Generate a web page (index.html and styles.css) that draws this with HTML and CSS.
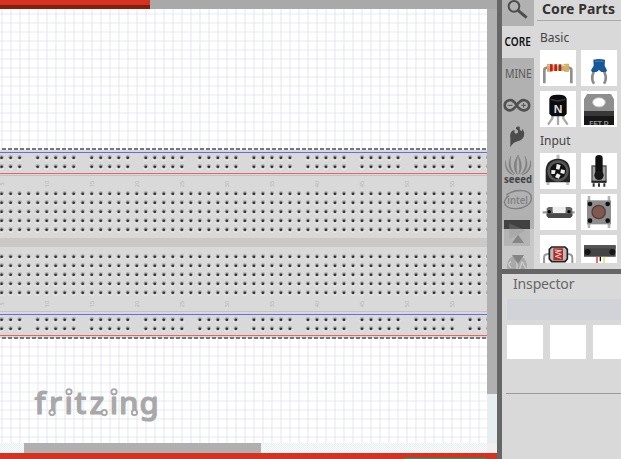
FILE: index.html
```html
<!DOCTYPE html>
<html lang="en">
<head>
<meta charset="utf-8">
<title>Fritzing</title>
<link rel="stylesheet" href="styles.css">
</head>
<body>
<div class="app">
  <main class="workspace">
    <div class="tabs"><div class="tab-active"></div></div>
    <div class="stage">
      <div class="canvas">
        <svg class="board" width="487" height="191" viewBox="0 148 487 191">
          <rect y="150" width="487" height="188" fill="#d9d9d9"/>
          <rect y="238" width="487" height="9" fill="#cac9c7"/>
          <path d="M0 149H487" stroke="#777" stroke-width="2" stroke-dasharray="4 2" stroke-dashoffset="4"/>
          <path d="M0 338H487" stroke="#777" stroke-width="2" stroke-dasharray="4 2" stroke-dashoffset="4"/>
          <path d="M0 152.500H487M0 314.500H487" stroke="#6a68ed"/>
          <path d="M0 173.500H487M0 335.500H487" stroke="#ee6062"/>
          <path d="M0 175.500H487M0 311.500H487" stroke="#c2c2c2"/>
          <g id="holes"></g>
          <g id="labels" class="column-number"></g>
        </svg>
        <svg class="brand" width="130" height="40" viewBox="30 385 130 40">
          <g class="brand-text">
            <text y="414" x="34.500 49 64.500 74.500 89.500 109.700 119 139.500">fritzing</text>
          </g>
          <g fill="#fff" stroke="#a8a8a8" stroke-width="1.900">
            <circle cx="69" cy="391.700" r="2.600"/><circle cx="114" cy="391.700" r="2.600"/>
            <circle cx="52" cy="412.600" r="2.600"/><circle cx="104.300" cy="412.600" r="2.600"/><circle cx="134.500" cy="412.600" r="2.600"/>
          </g>
        </svg>
      </div>
      <div class="vscroll"><div class="vthumb"></div></div>
    </div>
    <div class="hscroll"><div class="hthumb"></div><div class="corner"></div></div>
    <div class="status"><div class="status-ok"></div></div>
  </main>
  <aside class="side">
    <section class="parts">
      <nav class="bins">
        <div class="bin search"><svg width="32" height="26" viewBox="0 0 96 78"><circle cx="36" cy="19" r="16" fill="none" stroke="#4c4c4c" stroke-width="6"/><path d="M48 31L74 53" stroke="#4c4c4c" stroke-width="9"/></svg></div>
        <div class="bin current"><span class="bin-label">CORE</span></div>
        <div class="bin"><span class="bin-label mine">MINE</span></div>
        <div class="bin"><svg viewBox="0 0 96 96"><path d="M44 46C36 32 28 29 21 31C4 36 4 57 21 61C32 63 38 55 44 46S58 28 68 31C86 36 86 57 68 61C58 63 51 57 44 46" fill="none" stroke="#515151" stroke-width="8"/><path d="M17 46H31M58 46H72M65 39V53" stroke="#515151" stroke-width="3"/></svg></div>
        <div class="bin"><svg viewBox="0 0 96 96"><path d="M25 76V47C23 34 29 24 37 25Q40 26 37 31C38 36 46 36 48 31C49 25 46 23 42 21C40 14 48 11 54 15C51 20 54 24 58 28C61 26 61 23 60 20C70 29 69 48 55 55C46 60 37 56 25 76Z" fill="#4b4b4b"/></svg></div>
        <div class="bin"><svg viewBox="0 0 96 96"><g fill="#808080" stroke="#808080"><path d="M48 3C31 29 34 48 46 61C42 40 42 29 48 3ZM48 3C62 27 61 48 50 61C54 40 53 29 48 3ZM27 6C14 33 22 51 40 61C24 44 23 29 27 6ZM69 6C82 33 74 51 56 61C72 44 73 29 69 6ZM11 19C5 40 17 60 36 63C18 52 11 40 11 19ZM85 19C91 40 79 60 60 63C78 52 85 40 85 19Z"/></g><text class="seeed" x="6" y="87" textLength="84" lengthAdjust="spacingAndGlyphs">seeed</text></svg></div>
        <div class="bin"><svg viewBox="0 0 96 96"><path d="M13 28C34 10 87 5 88 36C89 55 65 67 43 68C17 69 5 58 8 45C11 36 15 32 20 29" fill="none" stroke="#808080" stroke-width="4"/><text class="intel" x="16" y="54" textLength="62" lengthAdjust="spacingAndGlyphs">intel</text></svg></div>
        <div class="bin"><svg viewBox="0 0 96 96"><path d="M6 6H84V33H6Z" fill="#414141"/><path d="M0 33H96V96H0Z" fill="#c8c8c8"/><path d="M6 33H84V84H6Z" fill="#b4b4b4"/><path d="M22 16L61 33H22Z" fill="#5a5a5a"/><path d="M22 33H62L70 38L22 63Z" fill="#a9a9a9"/><path d="M48 50L66 75H30Z" fill="#858585"/></svg></div>
        <div class="bin last"><svg viewBox="0 0 96 57"><circle cx="45" cy="46" r="30" fill="#a9a9a9"/><path d="M45 13V57M27 35Q14 42 27 53M60 35L53 57M60 35L72 57" fill="none" stroke="#ccc" stroke-width="4"/><path d="M30 15H66L48 41Z" fill="#858585"/></svg></div>
      </nav>
      <div class="catalog">
        <h1 class="catalog-title">Core Parts</h1>
        <h2 class="group basic">Basic</h2>
        <div class="tiles">
          <svg viewBox="0 0 108 108"><path d="M13 100V60Q13 53 25 53H82Q94 53 94 60V100" fill="none" stroke="#8f8f8f" stroke-width="8"/><path d="M21 42H34L39 44H69L74 41H87V65H74L69 62H39L34 65H21Z" fill="#d0aa72"/><path d="M25 47H84" stroke="#e5cd9f" stroke-width="4"/><path d="M34 43V64M47 43V63" stroke="#d51812" stroke-width="8"/><path d="M60 43V63" stroke="#893b15" stroke-width="8"/><path d="M80 42V65" stroke="#d7b348" stroke-width="6"/></svg>
          <svg viewBox="0 0 108 108"><path d="M41 56L34 78Q32 91 39 101M67 56L74 78Q76 91 69 101" fill="none" stroke="#8b8b8b" stroke-width="8"/><path d="M37 29Q54 25 72 29L71 47L78 61L75 66H61L54 60L47 66H33L30 61L38 47Z" fill="#185899"/><path d="M41 34H68" stroke="#3475b2" stroke-width="4"/></svg>
          <svg viewBox="0 0 108 108"><path d="M37 72V82L24 101M54 72V102M70 72V82L83 101" fill="none" stroke="#aaa" stroke-width="7"/><path d="M28 24Q30 10 54 11Q78 10 80 24V69L72 76H36L28 69Z" fill="#0c0c0c"/><path d="M32 25Q54 34 76 25" fill="none" stroke="#333" stroke-width="5"/><text class="transistor" x="41" y="65" textLength="26" lengthAdjust="spacingAndGlyphs">N</text></svg>
          <svg viewBox="0 0 108 108"><path d="M9 25L18 9H90L99 25V64H9Z" fill="#8e8e8e"/><ellipse cx="54" cy="34" rx="19" ry="14" fill="#fff" stroke="#bcbcbc" stroke-width="3"/><path d="M9 60H99V102H9Z" fill="#171717"/><path d="M9 60H99V75H9Z" fill="#383838"/><text class="fet" x="25" y="101" textLength="58" lengthAdjust="spacingAndGlyphs">FET D</text></svg>
        </div>
        <h2 class="group input">Input</h2>
        <div class="tiles second">
          <svg viewBox="0 0 108 108"><path d="M54 5V20M24 83V96M83 83V96" stroke="#bbb" stroke-width="9"/><path d="M17 55Q17 18 54 17Q90 18 90 55V88H17Z" fill="#242424"/><circle cx="54" cy="54" r="32" fill="#555"/><circle cx="54" cy="54" r="24" fill="#111"/><g fill="#eee"><path d="M50 33L62 36L58 50L48 48ZM34 51L47 52L44 63L34 63ZM63 49L75 52L73 63L61 60ZM51 61L62 66L56 77L45 72Z"/></g></svg>
          <svg viewBox="0 0 108 108"><path d="M38 91V101M54 91V101M70 91V101" stroke="#333" stroke-width="6"/><path d="M33 39H75V87H33Z" fill="#9f9f9f" stroke="#555" stroke-width="4"/><path d="M43 15Q43 6 54 6Q65 6 65 15V69Q54 84 43 69Z" fill="#101010"/><circle cx="54" cy="67" r="14" fill="#171717"/><path d="M32 86H76" stroke="#222" stroke-width="6"/></svg>
          <svg viewBox="0 0 108 108"><path d="M8 55H104" stroke="#999" stroke-width="7"/><path d="M39 38H77V60H39Z" fill="#ededed"/><path d="M20 43L26 39H38V57H77V39H90L97 43V66L90 72H26L20 66Z" fill="#666"/><path d="M20 59H97V66L90 72H26L20 66Z" fill="#484848"/><circle cx="28" cy="53" r="5"/><circle cx="87" cy="53" r="5"/></svg>
          <svg viewBox="0 0 108 108"><path d="M24 6V102M84 6V102" stroke="#b3b3b3" stroke-width="8"/><path d="M18 19H90V91H18Z" fill="#8d8d8d"/><circle cx="53" cy="54" r="20" fill="#80594e" stroke="#553f38" stroke-width="4"/><g fill="#111"><circle cx="27" cy="30" r="7"/><circle cx="80" cy="30" r="7"/><circle cx="27" cy="80" r="7"/><circle cx="80" cy="80" r="7"/></g></svg>
          <svg class="cut" viewBox="0 0 108 84"><path d="M12 84V69Q12 57 25 57H84Q97 57 97 69V84" fill="none" stroke="#999" stroke-width="6"/><path d="M35 36H75L82 43V72L75 80H35L28 72V43Z" fill="#bbb" stroke="#222" stroke-width="5"/><path d="M40 40H69V75H40Z" fill="#b42b25"/><path d="M44 45L64 47L46 52L64 58L46 64L64 70" fill="none" stroke="#f6d8d1" stroke-width="3"/></svg>
          <svg class="cut" viewBox="0 0 108 84"><path d="M9 30H99Q104 30 104 35V65H9Z" fill="#444"/><path d="M9 30H104V40H9Z" fill="#555"/><circle cx="20" cy="51" r="9" fill="#151515"/><circle cx="94" cy="51" r="9" fill="#151515"/><path d="M48 65V84" stroke="#e32420" stroke-width="4"/><path d="M58 65V79" stroke="#111" stroke-width="4"/><path d="M69 65V84" stroke="#e8dc28" stroke-width="4"/></svg>
        </div>
      </div>
    </section>
    <section class="inspector">
      <h2 class="inspector-title">Inspector</h2>
      <div class="name-field"></div>
      <div class="views"><i></i><i></i><i></i></div>
      <div class="rule"></div>
    </section>
  </aside>
</div>
<script src="board.js"></script>
</body>
</html>
```
FILE: styles.css
```css
* { box-sizing: border-box; }
body { margin: 0; overflow: hidden; font-family: "Noto Sans", sans-serif; }
svg { display: block; }
.app { display: flex; width: 621px; height: 459px; background: #d9d9d9; }
.workspace { width: 497px; display: flex; flex-direction: column; }
.tabs { height: 9px; background: #a9a9a9; }
.tab-active { width: 150px; height: 9px; background: #d53222; border-bottom: 4px solid #831f0d; }
.stage { display: flex; height: 434px; }
.canvas {
  width: 487px;
  padding-top: 139px;
  background-color: #fff;
  background-image:
    linear-gradient(90deg, rgba(220,223,233,.38) 2px, transparent 2px),
    linear-gradient(rgba(220,223,233,.32) 2px, transparent 2px);
  background-size: 9px 9px;
  background-position: 1px 0, 0 4px;
}
.brand { margin: 46px 0 0 30px; }
.brand-text { font: 500 31px "Noto Sans", sans-serif; fill: #a8a8a8; stroke: #a8a8a8; stroke-width: 1.1; stroke-linejoin: round; }
.column-number { font: 5.5px "Noto Sans", sans-serif; fill: #b4b4b4; text-anchor: middle; }
.vscroll { width: 10px; background: #e6eef1; }
.vthumb { height: 385px; background: #b0b0b0; }
.hscroll {
  display: flex;
  height: 10px;
  padding-left: 24px;
  background: repeating-conic-gradient(#e4edf0 0 25%, #fff 0 50%) 0 0 / 2px 2px;
}
.hthumb { width: 237px; background: #b0b0b0; }
.corner { width: 10px; margin-left: auto; background: #f0f0f0; }
.status { height: 6px; padding: 5px 0 0 404px; background: #d53222; }
.status-ok { width: 83px; height: 1px; background: #14a06d; }
.side { width: 124px; border-left: 5px solid #666; }
.parts { display: flex; height: 274px; border-bottom: 5px solid #666; overflow: hidden; }
.bins { width: 32px; flex: none; background: #b1b1b1; }
.bin { height: 32px; display: flex; align-items: center; justify-content: center; }
.bin svg { width: 32px; height: 32px; }
.bin.search { height: 26px; }
.bin.search svg { height: 26px; }
.bin.current { background: #d9d9d9; }
.bin.last { background: #c8c8c8; }
.bin.last, .bin.last svg { height: 19px; }
.bin-label { font-size: 12px; line-height: 16px; color: #111; font-weight: 600; transform: scaleX(.84); }
.bin-label.mine { color: #5a5a5a; font-weight: 400; transform: scaleX(.87); }
.seeed { font: 700 31px "Open Sans", sans-serif; fill: #444; }
.intel { font: 600 31px "Open Sans", sans-serif; fill: #808080; }
.transistor { font: 900 31px "Liberation Sans", sans-serif; fill: #ddd; }
.fet { font: 700 15px "Liberation Sans", sans-serif; fill: #999; }
.catalog { width: 87px; padding-left: 3px; }
.catalog-title { height: 21px; margin: 0; padding-left: 5px; border-bottom: 1px solid #aaa; font: 700 14px/18px "Noto Sans", sans-serif; color: #333; letter-spacing: .1px; white-space: nowrap; }
.group { margin: 0; padding-left: 3px; font: 400 12px/16px "Noto Sans", sans-serif; color: #444; letter-spacing: 0; }
.basic { height: 29px; padding-top: 9px; }
.input { height: 26px; padding-top: 6px; }
.tiles { display: grid; grid-template-columns: 36px 36px; gap: 5px; padding-left: 3px; }
.tiles svg { width: 36px; height: 36px; background: #fff; }
.tiles svg.cut { height: 28px; }
.inspector { height: 185px; padding-left: 4px; overflow: hidden; }
.inspector-title { height: 25px; margin: 0; padding: 0 0 0 7px; font: 400 14px/20px "Noto Sans", sans-serif; color: #666; letter-spacing: -.15px; }
.name-field { height: 21px; margin-left: 1px; background: #d2d2d9; }
.views { display: flex; gap: 7px; margin: 5px 0 0 1px; }
.views i { width: 36px; height: 34px; flex: none; background: #fff; }
.rule { height: 1px; margin-top: 34px; background: #999; }
```
FILE: board.js
```js
const ns = 'http://www.w3.org/2000/svg';
function add(parent, tag, attrs, text) {
  const node = document.createElementNS(ns, tag);
  for (const key in attrs) node.setAttribute(key, attrs[key]);
  if (text) node.textContent = text;
  document.getElementById(parent).append(node);
}
const rails = [157.7, 166.7, 319.7, 328.7];
const rows = [193.7, 202.7, 211.7, 220.7, 229.7, 256.7, 265.7, 274.7, 283.7, 292.7];
for (let i = 0; i < 55; i++) {
  const x = 1.6 + i * 9.01;
  for (const y of i % 6 === 3 ? rows : rows.concat(rails)) {
    add('holes', 'circle', { cx: x, cy: y + 0.5, r: 2.7, fill: '#e6e6e6' });
    add('holes', 'circle', { cx: x, cy: y - 0.4, r: 2.3, fill: '#b3b3b3' });
    add('holes', 'circle', { cx: x, cy: y, r: 1.3, fill: '#2e2e2e' });
  }
  if (i % 5 === 0) {
    for (const y of [184, 304]) {
      add('labels', 'text', { transform: `translate(${x + 2} ${y}) rotate(-90)` }, String(i + 5));
    }
  }
}
```
